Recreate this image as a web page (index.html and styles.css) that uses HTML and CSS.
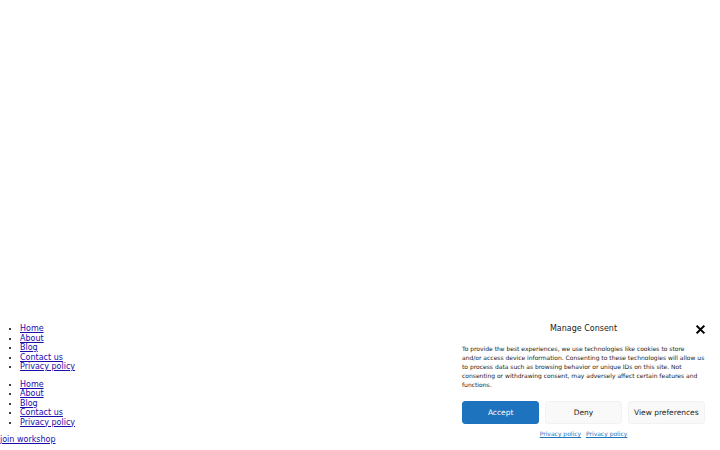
FILE: index.html
```html
<!DOCTYPE html>
<html lang="en">
<head>
<meta charset="utf-8">
<title>Page</title>
<link rel="stylesheet" href="styles.css">
</head>
<body>
<div class="page">
  <div class="spacer"></div>
  <ul class="menu">
    <li><a href="#">Home</a></li>
    <li><a href="#">About</a></li>
    <li><a href="#">Blog</a></li>
    <li><a href="#">Contact us</a></li>
    <li><a href="#">Privacy policy</a></li>
  </ul>
  <ul class="menu">
    <li><a href="#">Home</a></li>
    <li><a href="#">About</a></li>
    <li><a href="#">Blog</a></li>
    <li><a href="#">Contact us</a></li>
    <li><a href="#">Privacy policy</a></li>
  </ul>
  <a class="join" href="#">join workshop</a>
</div>

<div class="banner">
  <div class="banner-header">
    <div class="banner-title">Manage Consent</div>
    <button class="close" aria-label="Close">
      <svg viewBox="0 0 10 10" width="9" height="9"><path d="M1.5 1.5 L8.5 8.5 M8.5 1.5 L1.5 8.5" stroke="#000" stroke-width="2.2" stroke-linecap="square"/></svg>
    </button>
  </div>
  <p class="message">To provide the best experiences, we use technologies like cookies to store and/or access device information. Consenting to these technologies will allow us to process data such as browsing behavior or unique IDs on this site. Not consenting or withdrawing consent, may adversely affect certain features and functions.</p>
  <div class="buttons">
    <button class="btn accept">Accept</button>
    <button class="btn">Deny</button>
    <button class="btn">View preferences</button>
  </div>
  <div class="docs">
    <a href="#">Privacy policy</a>
    <a href="#">Privacy policy</a>
  </div>
</div>
</body>
</html>
```

FILE: styles.css
```css
html, body {
  margin: 0;
  padding: 0;
  background: #fff;
}
body {
  font-family: "DejaVu Sans", sans-serif;
  font-size: 8px;
  line-height: 9.5px;
  color: #000;
}
.spacer {
  height: 316px;
}
.menu {
  margin: 8px 0;
  padding-left: 20px;
}
.menu a, .join {
  color: #1a0dab;
}
.join {
  display: inline-block;
}

.banner {
  position: fixed;
  right: 5px;
  bottom: 2px;
  width: 243px;
  padding: 8px 10px 10px;
  background: #fff;
  color: #222;
}
.banner-header {
  position: relative;
  display: flex;
  justify-content: center;
  align-items: center;
  height: 10px;
}
.banner-title {
  font-size: 8px;
  line-height: 10px;
  color: #222;
}
.close {
  position: absolute;
  right: 0;
  top: 0;
  width: 10px;
  height: 10px;
  padding: 0;
  border: 0;
  background: none;
  display: flex;
  align-items: center;
  justify-content: center;
}
.message {
  margin: 9.5px 0 0;
  font-size: 6px;
  line-height: 9px;
  color: #222;
}
.buttons {
  display: grid;
  grid-template-columns: repeat(3, 1fr);
  gap: 5.5px;
  margin-top: 12px;
}
.btn {
  height: 23px;
  border: 1px solid #f2f2f2;
  background: #f9f9f9;
  color: #222;
  border-radius: 3px;
  font-family: "DejaVu Sans", sans-serif;
  font-size: 7.5px;
  padding: 0;
}
.btn.accept {
  background: #1e73be;
  border-color: #1e73be;
  color: #fff;
}
.docs {
  display: flex;
  justify-content: center;
  gap: 5px;
  margin-top: 5.5px;
  font-size: 6px;
  line-height: 9px;
}
.docs a {
  color: #1e73be;
}
```
